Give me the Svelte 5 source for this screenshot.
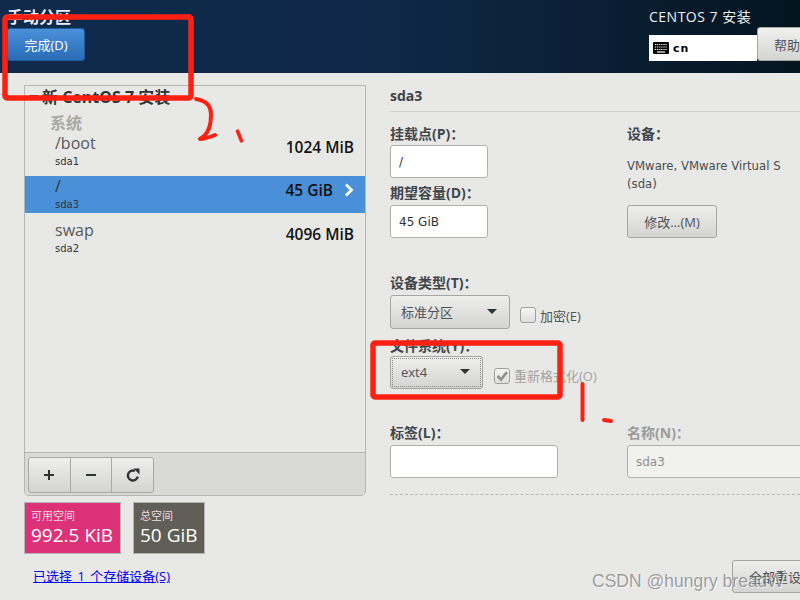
<script>
  const partitions = [
    { name: '/boot', dev: 'sda1', size: '1024 MiB' },
    { name: '/', dev: 'sda3', size: '45 GiB', selected: true },
    { name: 'swap', dev: 'sda2', size: '4096 MiB' }
  ];
</script>

<div class="page">
  <header class="top">
    <div class="top-left">
      <div class="spoke-title">手动分区</div>
      <button class="done">完成(D)</button>
    </div>
    <div class="top-right">
      <div class="product">CENTOS 7 安装</div>
      <div class="kb-row">
        <div class="kb">
          <svg width="16" height="12" viewBox="0 0 16 12">
            <rect width="16" height="12" rx="1" fill="#000" />
            <path d="M2 2.500h12M2 5h12M2 7.500h12" stroke="#fff" stroke-width="1.200" stroke-dasharray="1.200 .9" />
            <path d="M4 10h8" stroke="#fff" stroke-width="1.200" />
          </svg>
          <span>cn</span>
        </div>
        <button class="help">帮助</button>
      </div>
    </div>
  </header>

  <main class="body">
    <section class="left">
      <div class="panel">
        <div class="tree">
          <div class="root"><span class="arrow"></span>新 CentOS 7 安装</div>
          <div class="group">系统</div>
          {#each partitions as p}
            <div class="part" class:selected={p.selected}>
              <div class="names">
                <div class="mount">{p.name}</div>
                <div class="dev">{p.dev}</div>
              </div>
              <div class="size">{p.size}</div>
              {#if p.selected}
                <svg class="chev" width="12" height="14" viewBox="0 0 12 14">
                  <path d="M4 1.500 9.500 7 4 12.500" fill="none" stroke="#fff" stroke-width="2.800" />
                </svg>
              {/if}
            </div>
          {/each}
        </div>
        <div class="toolbar">
          <div class="tools">
            <button class="tool">
              <svg width="12" height="12" viewBox="0 0 12 12"><path d="M6 1v10M1 6h10" stroke="#2e3436" stroke-width="2" /></svg>
            </button>
            <button class="tool">
              <svg width="12" height="12" viewBox="0 0 12 12"><path d="M1 6h10" stroke="#2e3436" stroke-width="2" /></svg>
            </button>
            <button class="tool">
              <svg width="14" height="14" viewBox="0 0 14 14">
                <path d="M11.800 8.600A5 5 0 1 1 9 2.900" fill="none" stroke="#2e3436" stroke-width="2.400" />
                <path d="M7.500 .5h6v6z" fill="#2e3436" />
              </svg>
            </button>
          </div>
        </div>
      </div>

      <div class="tiles">
        <div class="tile free">
          <div class="tile-label">可用空间</div>
          <div class="tile-value">992.5 KiB</div>
        </div>
        <div class="tile total">
          <div class="tile-label">总空间</div>
          <div class="tile-value">50 GiB</div>
        </div>
      </div>
      <a class="devices" href="#top">已选择 1 个存储设备(S)</a>
    </section>

    <section class="right">
      <h2>sda3</h2>
      <div class="cols">
        <div class="col-a">
          <div class="label first">挂载点(P)：</div>
          <input class="field small" value="/" />
          <div class="label second">期望容量(D)：</div>
          <input class="field small" value="45 GiB" />
        </div>
        <div class="col-b">
          <div class="label first">设备：</div>
          <p class="device-text">VMware, VMware Virtual S<br />(sda)</p>
          <button class="modify">修改...(M)</button>
        </div>
      </div>

      <div class="label type-label">设备类型(T)：</div>
      <div class="combo-row">
        <button class="combo wide">标准分区<span class="caret"></span></button>
        <label class="check"><span class="box"></span>加密(E)</label>
      </div>

      <div class="label fs-label">文件系统(Y)：</div>
      <div class="combo-row fs-row">
        <button class="combo narrow focused">ext4<span class="caret"></span></button>
        <label class="check off">
          <span class="box">
            <svg width="14" height="12" viewBox="0 0 14 12"><path d="M2.500 6 6 9.500 12 2" fill="none" stroke="#8f8f8d" stroke-width="2.600" /></svg>
          </span>重新格式化(O)
        </label>
      </div>

      <div class="names-row">
        <div class="col-a">
          <div class="label tall">标签(L)：</div>
          <input class="field label-field" />
        </div>
        <div class="col-b off-label">
          <div class="label tall">名称(N)：</div>
          <input class="field name-field" value="sda3" disabled />
        </div>
      </div>
      <div class="dashed"></div>
      <div class="reset-row"><button class="reset">全部重设(R)</button></div>
    </section>
  </main>

  <svg class="marks" width="800" height="600" viewBox="0 0 800 600">
    <g fill="none" stroke="#ff2012" stroke-width="5.500" stroke-linecap="round" stroke-linejoin="round">
      <rect x="5" y="17" width="186" height="81" rx="2" />
      <rect x="373" y="343" width="187" height="54" rx="2" />
      <path d="M196 99c10 2 15 6 15 16 0 10-3 18-8 22l-3 2c5 0 10-2 15-4" stroke-width="4" />
      <path d="M237.500 131l4 10" stroke-width="3.500" />
      <path d="M582.500 384v36" stroke-width="4" />
      <path d="M604 420l7 1" stroke-width="4" />
    </g>
  </svg>
  <div class="watermark">CSDN @hungry breadW</div>
</div>

<style>
  :global(body) {
    margin: 0;
  }

  .page {
    position: relative;
    width: 800px;
    height: 600px;
    overflow: hidden;
    background: #e8e8e7;
    color: #2e3436;
    font-family: "Open Sans", "Noto Sans CJK SC", sans-serif;
    font-size: 13px;
  }

  button {
    font-family: inherit;
  }

  .top {
    display: flex;
    justify-content: space-between;
    height: 73px;
    box-sizing: border-box;
    padding: 7px 0 0 7px;
    background: linear-gradient(90deg, #0f2a4a 0%, #10294a 45%, #0b2037 72%, #04141f 100%);
  }

  .spoke-title {
    height: 21px;
    line-height: 20px;
    color: #eef;
    font-size: 16px;
    font-weight: 700;
  }

  .done {
    display: block;
    width: 78px;
    height: 33px;
    padding: 0;
    border: 1px solid #1f5b9c;
    border-radius: 3px;
    background: linear-gradient(#4a90d9, #2a6cb6);
    color: #fff;
    font-size: 13px;
  }

  .top-right {
    width: 151px;
  }

  .product {
    height: 20px;
    line-height: 19px;
    color: #eee;
    font-size: 14px;
    letter-spacing: 0.5px;
  }

  .kb-row {
    display: flex;
    align-items: flex-start;
  }

  .kb {
    flex: none;
    display: flex;
    align-items: center;
    gap: 4px;
    width: 108px;
    height: 26px;
    box-sizing: border-box;
    margin-top: 8px;
    padding-left: 4px;
    background: #fff;
    color: #000;
    font-family: "DejaVu Sans", sans-serif;
    font-size: 11px;
    font-weight: 700;
    letter-spacing: 1px;
  }

  .help {
    flex: none;
    width: 60px;
    height: 34px;
    padding: 0 0 0 16px;
    text-align: left;
    border: 1px solid #a6a6a4;
    border-radius: 3px;
    background: linear-gradient(#f0f0ef, #d4d4d2);
    color: #4f5355;
    font-size: 13px;
    white-space: nowrap;
  }

  .body {
    display: flex;
    height: 527px;
  }

  .left {
    flex: none;
    width: 342px;
    margin: 12px 0 0 24px;
  }

  .panel {
    display: flex;
    flex-direction: column;
    height: 411px;
    box-sizing: border-box;
    border: 1px solid #b5b5b3;
    border-radius: 0 0 5px 5px;
  }

  .tree {
    flex: 1;
  }

  .root {
    display: flex;
    align-items: center;
    height: 22px;
    padding: 0 0 0 4px;
    color: #2e3436;
    font-size: 16px;
    font-weight: 700;
    line-height: 22px;
    white-space: pre;
  }

  .arrow {
    width: 0;
    height: 0;
    margin-right: 3px;
    border-left: 5px solid transparent;
    border-right: 5px solid transparent;
    border-top: 5px solid #2e3436;
  }

  .group {
    height: 20px;
    margin-top: 5px;
    padding-left: 25px;
    color: #a8a8a6;
    font-size: 16px;
    font-weight: 700;
    line-height: 20px;
  }

  .part {
    display: flex;
    align-items: flex-start;
    height: 37px;
    padding: 0 11px 0 30px;
    box-sizing: border-box;
  }

  .part.selected {
    margin: 6px 0 7px;
    background: #4a90d9;
  }

  .names {
    flex: 1;
  }

  .mount {
    height: 20px;
    color: #55595b;
    font-size: 16px;
    line-height: 20px;
  }

  .selected .mount {
    color: #2e3436;
  }

  .dev {
    color: #2e3436;
    font-family: "DejaVu Sans", sans-serif;
    font-size: 10px;
    line-height: 17px;
  }

  .size {
    margin-top: 4px;
    color: #111;
    font-size: 15.500px;
    font-weight: 600;
    line-height: 20px;
  }

  .chev {
    margin: 7px 0 0 9px;
  }

  .toolbar {
    flex: none;
    height: 43px;
    box-sizing: border-box;
    padding: 4px 0 0 3px;
    border-top: 1px solid #b5b5b3;
    border-radius: 0 0 5px 5px;
    background: #d9d9d7;
  }

  .tools {
    display: flex;
    width: 126px;
    height: 36px;
    box-sizing: border-box;
    border: 1px solid #a9a9a7;
    border-radius: 3px;
    background: linear-gradient(#eeeeed, #d4d4d2);
  }

  .tool {
    flex: 1;
    display: flex;
    align-items: center;
    justify-content: center;
    padding: 0;
    border: 0;
    border-left: 1px solid #a9a9a7;
    background: none;
  }

  .tool:first-child {
    border-left: 0;
  }

  .tiles {
    display: flex;
    gap: 12px;
    margin-top: 6px;
  }

  .tile {
    height: 52px;
    box-sizing: border-box;
    padding: 4px 6px 0;
    border: 1px solid #b5b5b3;
    color: #fff;
  }

  .free {
    width: 97px;
    background: #dd3278;
  }

  .total {
    width: 72px;
    background: #5f5f57;
  }

  .tile-label {
    height: 17px;
    color: #f0d8e2;
    font-size: 11px;
    line-height: 17px;
  }

  .tile-value {
    font-size: 19px;
    font-weight: 500;
    line-height: 22px;
    white-space: nowrap;
  }

  .devices {
    display: block;
    margin: 14px 0 0 9px;
    color: #0000ee;
    font-size: 13px;
    line-height: 17px;
    word-spacing: 2px;
  }

  .right {
    flex: 1;
    min-width: 0;
    margin-left: 24px;
  }

  h2 {
    height: 39px;
    box-sizing: border-box;
    margin: 0 0 12px;
    padding-top: 13px;
    border-bottom: 1px solid #d0d0ce;
    color: #3d4244;
    font-size: 14px;
    font-weight: 700;
    line-height: 20px;
  }

  .cols,
  .names-row {
    display: flex;
  }

  .col-a {
    width: 237px;
    flex: none;
  }

  .col-b {
    flex: 1;
    min-width: 0;
  }

  .label {
    height: 21px;
    color: #41464a;
    font-size: 14px;
    font-weight: 700;
    line-height: 20px;
    white-space: nowrap;
  }

  .second {
    margin-top: 5px;
    height: 22px;
  }

  .tall {
    height: 22px;
  }

  .field {
    display: block;
    height: 33px;
    box-sizing: border-box;
    padding: 0 8px;
    border: 1px solid #b0b0ae;
    border-radius: 3px;
    background: #fff;
    color: #2e3436;
    font-family: "DejaVu Sans", sans-serif;
    font-size: 12px;
  }

  .small {
    width: 98px;
  }

  .device-text {
    margin: 12px 0 0;
    color: #4a4e50;
    font-family: "DejaVu Sans", sans-serif;
    font-size: 11.700px;
    line-height: 18px;
    white-space: nowrap;
  }

  .modify {
    display: block;
    width: 90px;
    height: 33px;
    margin-top: 12px;
    padding: 0;
    border: 1px solid #a6a6a4;
    border-radius: 3px;
    background: linear-gradient(#eeeeed, #d4d4d2);
    color: #4f5355;
    font-size: 13px;
  }

  .type-label {
    margin-top: 35px;
    height: 22px;
  }

  .combo-row {
    display: flex;
    align-items: center;
    gap: 10px;
  }

  .combo {
    display: flex;
    align-items: center;
    justify-content: space-between;
    height: 34px;
    box-sizing: border-box;
    padding: 0 12px 2px 10px;
    border: 1px solid #a6a6a4;
    border-radius: 3px;
    background: linear-gradient(#eeeeed, #d4d4d2);
    color: #4f5355;
    font-size: 13px;
  }

  .wide {
    width: 120px;
  }

  .narrow {
    width: 93px;
    height: 33px;
  }

  .focused {
    outline: 1px dotted #8a8a88;
    outline-offset: -3px;
  }

  .caret {
    width: 0;
    height: 0;
    border-left: 5px solid transparent;
    border-right: 5px solid transparent;
    border-top: 5px solid #2e3436;
  }

  .check {
    display: flex;
    align-items: center;
    gap: 4px;
    margin-top: 6px;
    color: #4f5355;
    font-size: 13px;
  }

  .box {
    display: flex;
    align-items: center;
    justify-content: center;
    box-sizing: border-box;
    width: 16px;
    height: 16px;
    border: 1px solid #a0a09e;
    border-radius: 3px;
    background: linear-gradient(#f4f4f3, #dededc);
  }

  .off {
    color: #a3a3a1;
  }

  .fs-row {
    gap: 11px;
  }

  .fs-label {
    margin-top: 7px;
    height: 20px;
  }

  .names-row {
    margin-top: 34px;
  }

  .label-field {
    width: 168px;
  }

  .name-field {
    width: 200px;
    background: #f1f1f0;
    color: #8f8f8d;
  }

  .off-label .label {
    color: #9b9b99;
  }

  .dashed {
    margin-top: 16px;
    height: 0;
    border-top: 1px dashed #b9b9b7;
  }

  .reset-row {
    margin-top: 65px;
    padding-left: 342px;
  }

  .reset {
    display: block;
    width: 90px;
    height: 33px;
    padding: 0 0 0 16px;
    text-align: left;
    white-space: nowrap;
    border: 1px solid #a6a6a4;
    border-radius: 3px;
    background: linear-gradient(#eeeeed, #d4d4d2);
    color: #4f5355;
    font-size: 13px;
  }

  .marks {
    position: absolute;
    top: 0;
    left: 0;
    pointer-events: none;
  }

  .watermark {
    position: absolute;
    left: 592px;
    top: 570px;
    color: rgba(100, 100, 100, 0.6);
    font-family: "Liberation Sans", sans-serif;
    font-size: 17.500px;
    line-height: 22px;
    white-space: nowrap;
    text-shadow: 1px 1px 0 rgba(255, 255, 255, 0.7);
  }
</style>
